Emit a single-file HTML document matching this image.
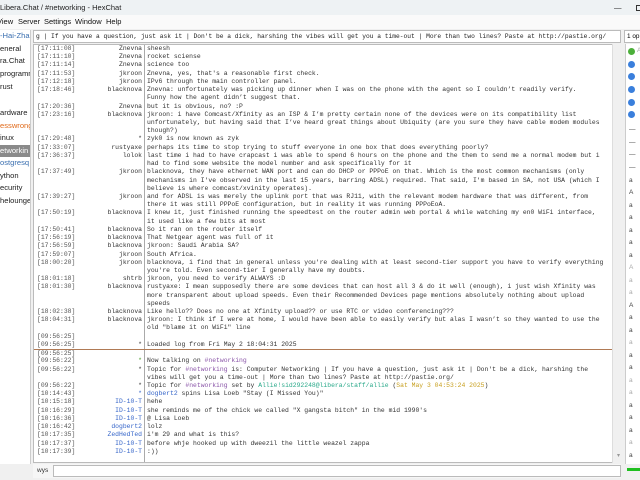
<!DOCTYPE html>
<html><head><meta charset="utf-8"><style>
*{margin:0;padding:0;box-sizing:border-box}
body{width:640px;height:480px;overflow:hidden;background:#f0f0f0;font-family:"Liberation Sans",sans-serif;position:relative}
.abs{position:absolute;white-space:nowrap}
#title{left:0;top:0;width:640px;height:15px;background:#eef2f4;font-size:7.5px;color:#222;line-height:15px}
#menu{left:0;top:15px;width:640px;height:14px;background:#fafafa;font-size:7.5px;color:#111;line-height:14px}
#topic{left:33px;top:30px;width:588px;height:13px;background:#fff;border:1px solid #bbb;font:6.25px "Liberation Mono",monospace;line-height:11px;padding-left:2px;color:#222;overflow:hidden}
#ops{left:624px;top:30px;width:20px;height:13px;background:#fff;border:1px solid #bbb;font-size:6.4px;line-height:11px;padding-left:2px}
#tree{left:0;top:30px;width:31px;height:434px;background:#fff;border-right:1px solid #ccc;font-size:7.6px;color:#222;overflow:hidden}
#tree div{position:absolute;left:0;height:12px;line-height:12px;width:31px}
#chat{left:33px;top:44px;width:580px;height:419px;background:#fff;border:1px solid #bbb;overflow:hidden;font:6.4px "Liberation Mono",monospace;color:#333}
#sep{position:absolute;left:110px;top:0;width:1px;height:419px;background:#aaa}
.r{position:absolute;left:0;height:8.22px;line-height:8.22px;width:580px;white-space:nowrap}
.t{position:absolute;left:3px;color:#555}
.n{position:absolute;right:472px;text-align:right}
.x{position:absolute;left:113px}
.b{color:#3565c9}.g{color:#4a9a2a}.p{color:#8a55a8}.tl{color:#2aa98a}.y{color:#c8a020}
#sb{left:612px;top:44px;width:12px;height:419px;background:#f0f0f0;border-left:1px solid #ddd}
#ul{left:625px;top:44px;width:15px;height:420px;background:#fff;border-left:1px solid #ccc;overflow:hidden;font-size:6.5px;color:#444}
#ul .d{position:absolute;left:2px;width:7px;height:7px;border-radius:50%;background:#3a7fdc}
#ul .u{position:absolute;left:3px;line-height:8px}
#input{left:33px;top:464px;width:588px;height:14px;background:#f6f6f6}
#ib{left:53px;top:465px;width:568px;height:12px;background:#fff;border:1px solid #bbb}
</style></head><body>
<div class="abs" id="title">Libera.Chat / #networking - HexChat<span style="position:absolute;left:614px;top:0">—</span><span style="position:absolute;left:636px;width:6px;height:6px;border:1px solid #333;top:5px"></span></div>
<div class="abs" id="menu"><span style="position:absolute;left:-3px">View</span><span style="position:absolute;left:18px">Server</span><span style="position:absolute;left:44px">Settings</span><span style="position:absolute;left:75px">Window</span><span style="position:absolute;left:106px">Help</span></div>
<div class="abs" id="topic">g | If you have a question, just ask it | Don't be a dick, harshing the vibes will get you a time-out | More than two lines? Paste at http://pastie.org/</div>
<div class="abs" id="ops">1 op</div>
<div class="abs" id="tree">
<div style="top:0;color:#3a6fb0">-Hai-Zha</div>
<div style="top:13px">eneral</div>
<div style="top:25px">ra.Chat</div>
<div style="top:38px">programm</div>
<div style="top:51px">rust</div>
<div style="top:77px">ardware</div>
<div style="top:90px;color:#e06a1a">esswrong</div>
<div style="top:102px">inux</div>
<div style="top:115px;background:#8a8a8a;color:#fff">etworkin</div>
<div style="top:127px;color:#3a6fb0">ostgresq</div>
<div style="top:140px">ython</div>
<div style="top:152px">ecurity</div>
<div style="top:165px">helounge</div>
</div>
<div class="abs" id="chat"><div id="sep"></div>
<div class="r" style="top:0px"><span class="t">[17:11:08]</span><span class="n">Znevna</span><span class="x">sheesh</span></div>
<div class="r" style="top:8.22px"><span class="t">[17:11:10]</span><span class="n">Znevna</span><span class="x">rocket sciense</span></div>
<div class="r" style="top:16.44px"><span class="t">[17:11:14]</span><span class="n">Znevna</span><span class="x">science too</span></div>
<div class="r" style="top:24.66px"><span class="t">[17:11:53]</span><span class="n">jkroon</span><span class="x">Znevna, yes, that's a reasonable first check.</span></div>
<div class="r" style="top:32.88px"><span class="t">[17:12:18]</span><span class="n">jkroon</span><span class="x">IPv6 through the main controller panel.</span></div>
<div class="r" style="top:41.1px"><span class="t">[17:18:46]</span><span class="n">blacknova</span><span class="x">Znevna:  unfortunately was picking up dinner when I was on the phone with the agent so I couldn’t readily verify.</span></div>
<div class="r" style="top:49.32px"><span class="x">Funny how the agent didn’t suggest that.</span></div>
<div class="r" style="top:57.54px"><span class="t">[17:20:36]</span><span class="n">Znevna</span><span class="x">but it is obvious, no? :P</span></div>
<div class="r" style="top:65.76px"><span class="t">[17:23:16]</span><span class="n">blacknova</span><span class="x">jkroon:  i have Comcast/Xfinity as an ISP &amp; I’m pretty certain none of the devices were on its compatibility list</span></div>
<div class="r" style="top:73.98px"><span class="x">unfortunately, but having said that I’ve heard great things about Ubiquity (are you sure they have cable modem modules</span></div>
<div class="r" style="top:82.2px"><span class="x">though?)</span></div>
<div class="r" style="top:90.42px"><span class="t">[17:29:48]</span><span class="n">*</span><span class="x">zyk0 is now known as zyk</span></div>
<div class="r" style="top:98.64px"><span class="t">[17:33:07]</span><span class="n">rustyaxe</span><span class="x">perhaps its time to stop trying to stuff everyone in one box that does everything poorly?</span></div>
<div class="r" style="top:106.86px"><span class="t">[17:36:37]</span><span class="n">lolok</span><span class="x">last time i had to have crapcast i was able to spend 6 hours on the phone and the them to send me a normal modem but i</span></div>
<div class="r" style="top:115.08px"><span class="x">had to find some website the model number and ask specifically for it</span></div>
<div class="r" style="top:123.3px"><span class="t">[17:37:49]</span><span class="n">jkroon</span><span class="x">blacknova, they have ethernet WAN port and can do DHCP or PPPoE on that.  Which is the most common mechanisms (only</span></div>
<div class="r" style="top:131.52px"><span class="x">mechanisms in I've observed in the last 15 years, barring ADSL) required.  That said, I'm based in SA, not USA (which I</span></div>
<div class="r" style="top:139.74px"><span class="x">believe is where comcast/xvinity operates).</span></div>
<div class="r" style="top:147.96px"><span class="t">[17:39:27]</span><span class="n">jkroon</span><span class="x">and for ADSL is was merely the uplink port that was RJ11, with the relevant modem hardware that was different, from</span></div>
<div class="r" style="top:156.18px"><span class="x">there it was still PPPoE configuration, but in reality it was running PPPoEoA.</span></div>
<div class="r" style="top:164.4px"><span class="t">[17:50:19]</span><span class="n">blacknova</span><span class="x">I knew it, just finished running the speedtest on the router admin web portal &amp; while watching my en0 WiFi interface,</span></div>
<div class="r" style="top:172.62px"><span class="x">it used like a few bits at most</span></div>
<div class="r" style="top:180.84px"><span class="t">[17:50:41]</span><span class="n">blacknova</span><span class="x">So it ran on the router itself</span></div>
<div class="r" style="top:189.06px"><span class="t">[17:56:19]</span><span class="n">blacknova</span><span class="x">That Netgear agent was full of it</span></div>
<div class="r" style="top:197.28px"><span class="t">[17:56:59]</span><span class="n">blacknova</span><span class="x">jkroon: Saudi Arabia SA?</span></div>
<div class="r" style="top:205.5px"><span class="t">[17:59:07]</span><span class="n">jkroon</span><span class="x">South Africa.</span></div>
<div class="r" style="top:213.72px"><span class="t">[18:00:20]</span><span class="n">jkroon</span><span class="x">blacknova, i find that in general unless you're dealing with at least second-tier support you have to verify everything</span></div>
<div class="r" style="top:221.94px"><span class="x">you're told.  Even second-tier I generally have my doubts.</span></div>
<div class="r" style="top:230.16px"><span class="t">[18:01:18]</span><span class="n">shtrb</span><span class="x">jkroon, you need to verify ALWAYS :D</span></div>
<div class="r" style="top:238.38px"><span class="t">[18:01:30]</span><span class="n">blacknova</span><span class="x">rustyaxe: I mean supposedly there are some devices that can host all 3 &amp; do it well (enough), i just wish Xfinity was</span></div>
<div class="r" style="top:246.6px"><span class="x">more transparent about upload speeds.  Even their Recommended Devices page mentions absolutely nothing about upload</span></div>
<div class="r" style="top:254.82px"><span class="x">speeds</span></div>
<div class="r" style="top:263.04px"><span class="t">[18:02:38]</span><span class="n">blacknova</span><span class="x">Like hello?? Does no one at Xfinity upload??  or use RTC or video conferencing???</span></div>
<div class="r" style="top:271.26px"><span class="t">[18:04:31]</span><span class="n">blacknova</span><span class="x">jkroon: I think if I were at home, I would have been able to easily verify but alas I wasn’t so they wanted to use the</span></div>
<div class="r" style="top:279.48px"><span class="x">old "blame it on WiFi" line</span></div>
<div class="r" style="top:287.7px"><span class="t">[09:56:25]</span></div>
<div class="r" style="top:295.92px"><span class="t">[09:56:25]</span><span class="n">*</span><span class="x">Loaded log from Fri May  2 18:04:31 2025</span></div>
<div style="position:absolute;left:0;top:304px;width:580px;height:1px;background:#b07a55"></div>
<div class="r" style="top:304.6px"><span class="t">[09:56:25]</span></div>
<div class="r" style="top:312.36px"><span class="t">[09:56:22]</span><span class="n g">*</span><span class="x">Now talking on <span class="p">#networking</span></span></div>
<div class="r" style="top:320.58px"><span class="t">[09:56:22]</span><span class="n">*</span><span class="x">Topic for <span class="p">#networking</span> is: Computer Networking | If you have a question, just ask it | Don't be a dick, harshing the</span></div>
<div class="r" style="top:328.8px"><span class="x">vibes will get you a time-out | More than two lines? Paste at http://pastie.org/</span></div>
<div class="r" style="top:337.02px"><span class="t">[09:56:22]</span><span class="n">*</span><span class="x">Topic for <span class="p">#networking</span> set by <span class="tl">Allie!sid292248@libera/staff/allie</span> (<span class="y">Sat May  3 04:53:24 2025</span>)</span></div>
<div class="r" style="top:345.24px"><span class="t">[10:14:43]</span><span class="n b">*</span><span class="x"><span class="b">dogbert2</span> spins Lisa Loeb "Stay (I Missed You)"</span></div>
<div class="r" style="top:353.46px"><span class="t">[10:15:18]</span><span class="n b">ID-10-T</span><span class="x">hehe</span></div>
<div class="r" style="top:361.68px"><span class="t">[10:16:29]</span><span class="n b">ID-10-T</span><span class="x">she reminds me of the chick we called "X gangsta bitch"  in the mid 1990's</span></div>
<div class="r" style="top:369.9px"><span class="t">[10:16:36]</span><span class="n b">ID-10-T</span><span class="x">@ Lisa Loeb</span></div>
<div class="r" style="top:378.12px"><span class="t">[10:16:42]</span><span class="n b">dogbert2</span><span class="x">lolz</span></div>
<div class="r" style="top:386.34px"><span class="t">[10:17:35]</span><span class="n b">ZedHedTed</span><span class="x">i'm 29 and what is this?</span></div>
<div class="r" style="top:394.56px"><span class="t">[10:17:37]</span><span class="n b">ID-10-T</span><span class="x">before whje hooked up with dweezil the little weazel zappa</span></div>
<div class="r" style="top:402.78px"><span class="t">[10:17:39]</span><span class="n b">ID-10-T</span><span class="x">:))</span></div>
</div>
<div class="abs" id="sb"><div style="position:absolute;left:4px;bottom:4px;font-size:6px;color:#999">▾</div></div>
<div class="abs" id="ul">
<div class="d" style="top:4px;background:#4caf3a"></div><div class="u" style="left:11px;top:3px;color:#aaa">A</div>
<div class="d" style="top:17px"></div>
<div class="d" style="top:29px"></div>
<div class="d" style="top:42px"></div>
<div class="d" style="top:55px"></div>
<div class="d" style="top:67px"></div>
<div class="u" style="top:82px">—</div><div class="u" style="top:95px">—</div><div class="u" style="top:107px">—</div><div class="u" style="top:120px">—</div>
<div class="u" style="top:133px">a</div><div class="u" style="top:145px">A</div><div class="u" style="top:158px">a</div><div class="u" style="top:170px">a</div><div class="u" style="top:183px">a</div><div class="u" style="top:195px">a</div><div class="u" style="top:208px">a</div><div class="u" style="top:220px;color:#aaa">A</div><div class="u" style="top:233px;color:#aaa">a</div><div class="u" style="top:245px;color:#aaa">a</div><div class="u" style="top:258px">A</div><div class="u" style="top:270px">a</div><div class="u" style="top:283px">a</div><div class="u" style="top:295px;color:#aaa">a</div><div class="u" style="top:308px">a</div><div class="u" style="top:320px">a</div><div class="u" style="top:333px;color:#aaa">a</div><div class="u" style="top:345px;color:#aaa">a</div><div class="u" style="top:358px">a</div><div class="u" style="top:370px">a</div><div class="u" style="top:383px">a</div><div class="u" style="top:395px;color:#aaa">a</div><div class="u" style="top:408px">a</div>
</div>
<div class="abs" style="left:627px;top:468px;width:13px;height:3px;background:#1fbf1f"></div>
<div class="abs" id="input"></div>
<div class="abs" style="left:37px;top:466px;font-size:6.5px;color:#333;line-height:10px">wys</div>
<div class="abs" id="ib"></div>
</body></html>
